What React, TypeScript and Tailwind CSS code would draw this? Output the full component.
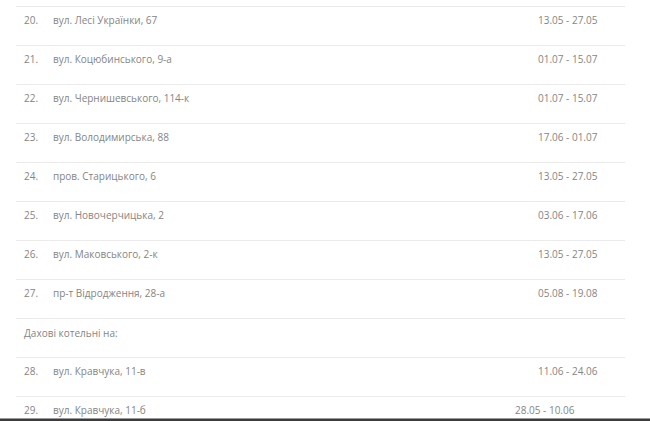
import React from 'react';

type Row =
  | { kind: 'item'; n: string; addr: string; dates: string; shift?: boolean }
  | { kind: 'head'; text: string };

const rows: Row[] = [
  { kind: 'item', n: '20.', addr: 'вул. Лесі Українки, 67', dates: '13.05 - 27.05' },
  { kind: 'item', n: '21.', addr: 'вул. Коцюбинського, 9-а', dates: '01.07 - 15.07' },
  { kind: 'item', n: '22.', addr: 'вул. Чернишевського, 114-к', dates: '01.07 - 15.07' },
  { kind: 'item', n: '23.', addr: 'вул. Володимирська, 88', dates: '17.06 - 01.07' },
  { kind: 'item', n: '24.', addr: 'пров. Старицького, 6', dates: '13.05 - 27.05' },
  { kind: 'item', n: '25.', addr: 'вул. Новочерчицька, 2', dates: '03.06 - 17.06' },
  { kind: 'item', n: '26.', addr: 'вул. Маковського, 2-к', dates: '13.05 - 27.05' },
  { kind: 'item', n: '27.', addr: 'пр-т Відродження, 28-а', dates: '05.08 - 19.08' },
  { kind: 'head', text: 'Дахові котельні на:' },
  { kind: 'item', n: '28.', addr: 'вул. Кравчука, 11-в', dates: '11.06 - 24.06' },
  { kind: 'item', n: '29.', addr: 'вул. Кравчука, 11-б', dates: '28.05 - 10.06', shift: true },
];

export default function App() {
  return (
    <div
      className="h-[421px] w-[650px] bg-white flex flex-col overflow-hidden text-[10px] leading-[16px] text-[#858585]"
      style={{ fontFamily: '"Open Sans", "Noto Sans", sans-serif' }}
    >
      <div className="flex-1 overflow-hidden pt-[6px] pl-[16px] pr-[25px]">
        {rows.map((r, i) =>
          r.kind === 'head' ? (
            <div key={i} className="h-[39px] border-t border-[#ebebeb] pt-[6px] pl-[8px]">
              {r.text}
            </div>
          ) : (
            <div key={i} className="h-[39px] border-t border-[#ebebeb] pt-[5px] flex">
              <div className="w-[37px] pl-[8px] shrink-0">{r.n}</div>
              <div className="flex-1">{r.addr}</div>
              <div className={r.shift ? 'w-[110px] shrink-0' : 'w-[87px] shrink-0'}>{r.dates}</div>
            </div>
          )
        )}
      </div>
      <div className="h-[1px] bg-[#9a9a9a]" />
      <div className="h-[2px] bg-[#3c3c3c]" />
    </div>
  );
}
